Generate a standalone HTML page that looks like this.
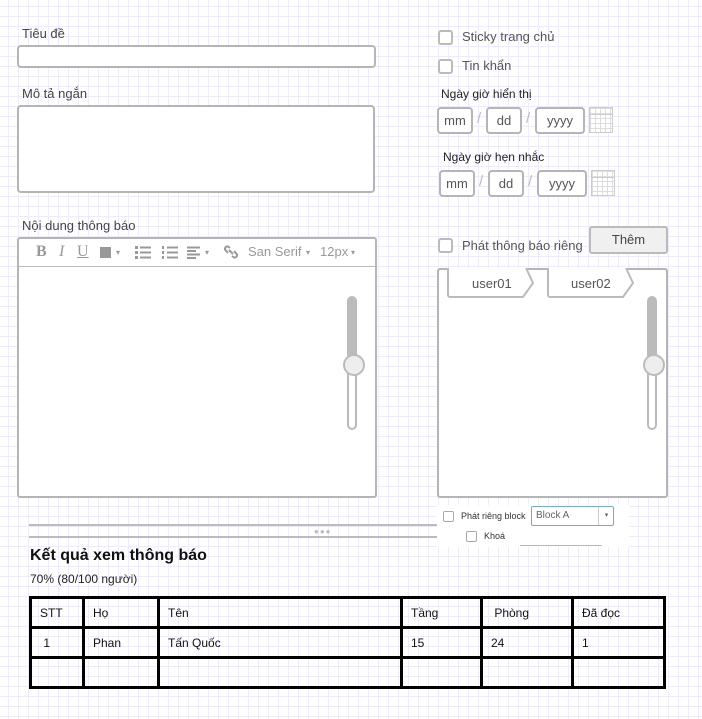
<!DOCTYPE html>
<html><head><meta charset="utf-8"><style>
*{box-sizing:border-box}
body{margin:0;width:702px;height:719px;overflow:hidden;position:relative;font-family:"Liberation Sans",Arial,sans-serif;color:#444;
background-color:#fff;
background-image:linear-gradient(to right,#ececfa 1px,transparent 1px),linear-gradient(to bottom,#ececfa 1px,transparent 1px);
background-size:10px 10px;background-position:8px 6px;}
.a{position:absolute}
.lbl{font-size:13px;color:#444}
.box{position:absolute;border:2px solid #b5b5b5;border-radius:4px;background:#fff}
.cb{position:absolute;width:15px;height:15px;border:2px solid #bbb;border-radius:3px;background:#fff}
.dt{position:absolute;height:27px;border:2px solid #b5b5b5;border-radius:4px;background:#fff;font-size:13px;color:#555;text-align:center;line-height:23px}
.sl{position:absolute;color:#bbb;font-size:15px}
.cal{position:absolute;width:24px;height:26px;border:1px solid #ccc;background:
linear-gradient(#ccc,#ccc) 0 6px/100% 1px no-repeat,
repeating-linear-gradient(to right,#ddd 0 1px,transparent 1px 5px),
repeating-linear-gradient(to bottom,#ddd 0 1px,transparent 1px 5px),#fff}
.slider{position:absolute;width:10px;height:134px;border:2px solid #bbb;border-radius:5px;background:#fff}
.slider:before{content:"";position:absolute;left:0;top:0;width:6px;height:62px;background:#bbb}
.slider:after{content:"";position:absolute;left:-6px;top:56px;width:18px;height:18px;border-radius:50%;border:2px solid #bbb;background:#eee}
table{border-collapse:collapse;font-size:12px;color:#111}
td{border:3px solid #000;padding:0 8px;height:30px}
.tb{position:absolute;top:243px;color:#999;font-size:15px;white-space:nowrap}
.car{font-size:8px;color:#999}
</style></head><body>
<div class="a lbl" style="left:22px;top:26px">Tiêu đề</div>
<div class="box" style="left:17px;top:45px;width:359px;height:23px"></div>
<div class="a lbl" style="left:22px;top:86px">Mô tả ngắn</div>
<div class="box" style="left:17px;top:105px;width:358px;height:88px"></div>
<div class="a lbl" style="left:22px;top:218px">Nội dung thông báo</div>
<div class="box" style="left:17px;top:237px;width:360px;height:261px;border-radius:3px"></div>
<div class="a" style="left:19px;top:266px;width:356px;height:1px;background:#bbb"></div>
<b class="tb" style="left:36px;font-family:'Liberation Serif';font-size:16px">B</b>
<i class="tb" style="left:59px;font-family:'Liberation Serif';font-size:16px">I</i>
<span class="tb" style="left:77px;font-family:'Liberation Serif';font-size:16px;text-decoration:underline">U</span>
<span class="a" style="left:100px;top:247px;width:11px;height:11px;background:#999"></span><span class="tb car" style="left:116px;top:248px">▾</span>
<svg class="a" style="left:135px;top:246px" width="16" height="13"><g fill="#999"><rect x="0" y="0" width="3" height="3"/><rect x="0" y="5" width="3" height="3"/><rect x="0" y="10" width="3" height="3"/><rect x="5" y="0.5" width="11" height="2"/><rect x="5" y="5.5" width="11" height="2"/><rect x="5" y="10.5" width="11" height="2"/></g></svg>
<svg class="a" style="left:162px;top:246px" width="16" height="13"><g fill="#999"><rect x="0" y="0" width="2" height="3"/><rect x="0" y="5" width="2" height="3"/><rect x="0" y="10" width="2" height="3"/><rect x="5" y="0.5" width="11" height="2"/><rect x="5" y="5.5" width="11" height="2"/><rect x="5" y="10.5" width="11" height="2"/></g></svg>
<svg class="a" style="left:187px;top:246px" width="14" height="13"><g fill="#999"><rect x="0" y="0.5" width="13" height="2"/><rect x="0" y="4" width="9" height="2"/><rect x="0" y="7.5" width="13" height="2"/><rect x="0" y="11" width="9" height="2"/></g></svg>
<span class="tb car" style="left:205px;top:248px">▾</span>
<svg class="a" style="left:224px;top:245px" width="14" height="14"><g fill="none" stroke="#999" stroke-width="2"><path d="M6 3L4 1.5a2.5 2.5 0 0 0-3 3L4 8"/><path d="M8 11l2 1.5a2.5 2.5 0 0 0 3-3L10 6"/><path d="M5 5l4 4"/></g></svg>
<span class="tb" style="left:248px;top:244px;font-size:13px">San Serif</span><span class="tb car" style="left:306px;top:248px">▾</span>
<span class="tb" style="left:320px;top:244px;font-size:13px">12px</span><span class="tb car" style="left:351px;top:248px">▾</span>
<div class="slider" style="left:347px;top:296px"></div>

<div class="cb" style="left:438px;top:30px"></div><div class="a lbl" style="left:462px;top:29px;color:#555">Sticky trang chủ</div>
<div class="cb" style="left:438px;top:59px"></div><div class="a lbl" style="left:462px;top:58px;color:#555">Tin khẩn</div>
<div class="a" style="left:441px;top:87px;font-size:12px;color:#222">Ngày giờ hiển thị</div>
<div class="dt" style="left:437px;top:107px;width:36px">mm</div><div class="sl" style="left:477px;top:110px">/</div>
<div class="dt" style="left:486px;top:107px;width:36px">dd</div><div class="sl" style="left:526px;top:110px">/</div>
<div class="dt" style="left:535px;top:107px;width:50px">yyyy</div><div class="cal" style="left:589px;top:107px"></div>
<div class="a" style="left:443px;top:150px;font-size:12px;color:#222">Ngày giờ hẹn nhắc</div>
<div class="dt" style="left:439px;top:170px;width:36px">mm</div><div class="sl" style="left:479px;top:173px">/</div>
<div class="dt" style="left:488px;top:170px;width:36px">dd</div><div class="sl" style="left:528px;top:173px">/</div>
<div class="dt" style="left:537px;top:170px;width:50px">yyyy</div><div class="cal" style="left:591px;top:170px"></div>
<div class="cb" style="left:438px;top:238px"></div><div class="a lbl" style="left:462px;top:238px;color:#555">Phát thông báo riêng</div>
<div class="a" style="left:589px;top:226px;width:79px;height:28px;border:2px solid #bbb;border-radius:3px;background:#f0f0f0;font-size:13px;text-align:center;line-height:24px;color:#444">Thêm</div>
<div class="box" style="left:437px;top:268px;width:231px;height:230px;border-radius:3px"></div>
<svg class="a" style="left:446px;top:268px" width="190" height="32"><path d="M2 0V27a2 2 0 0 0 2 2H77L87 15L80 0" fill="#fff" stroke="#bbb" stroke-width="2"/><path d="M102 0V27a2 2 0 0 0 2 2H177L187 15L180 0" fill="#fff" stroke="#bbb" stroke-width="2"/><text x="26" y="20" font-size="13" fill="#555" font-family="Liberation Sans">user01</text><text x="125" y="20" font-size="13" fill="#555" font-family="Liberation Sans">user02</text></svg>
<div class="slider" style="left:647px;top:296px"></div>

<div class="a" style="left:29px;top:524px;width:600px;height:2px;background:#bbb"></div>
<div class="a" style="left:29px;top:536px;width:600px;height:2px;background:#bbb"></div>
<div class="a" style="left:314px;top:527px;font-size:8px;color:#bbb;letter-spacing:1px">●●●</div>
<div class="a" style="left:437px;top:505px;width:192px;height:42px;background:#fff"></div>
<div class="a" style="left:443px;top:511px;width:11px;height:11px;border:1px solid #aaa;border-radius:2px"></div>
<div class="a" style="left:461px;top:511px;font-size:9px;color:#333">Phát riêng block</div>
<div class="a" style="left:531px;top:506px;width:83px;height:20px;border:1px solid #7ab;border-radius:2px;font-size:10px;color:#666;line-height:18px;padding-left:4px;background:#fff">Block A<span style="position:absolute;left:66px;top:0;width:16px;height:18px;border-left:1px solid #ccc;font-size:7px;text-align:center">▾</span></div>
<div class="a" style="left:466px;top:531px;width:11px;height:11px;border:1px solid #aaa;border-radius:2px"></div>
<div class="a" style="left:484px;top:531px;font-size:9px;color:#333">Khoá</div>
<div class="a" style="left:520px;top:545px;width:82px;height:1px;background:#f0a0a0"></div>

<div class="a" style="left:30px;top:547px;font-size:16px;font-weight:bold;color:#111">Kết quả xem thông báo</div>
<div class="a" style="left:30px;top:572px;font-size:12px;color:#222">70% (80/100 người)</div>
<table class="a" style="left:29px;top:596px;width:637px">
<tr><td style="width:53px">STT</td><td style="width:75px">Họ</td><td style="width:243px">Tên</td><td style="width:80px">Tầng</td><td style="width:91px">&nbsp;Phòng</td><td>Đã đọc</td></tr>
<tr><td>&nbsp;1</td><td>Phan</td><td>Tấn Quốc</td><td>15</td><td>24</td><td>1</td></tr>
<tr><td></td><td></td><td></td><td></td><td></td><td></td></tr>
</table>
</body></html>
